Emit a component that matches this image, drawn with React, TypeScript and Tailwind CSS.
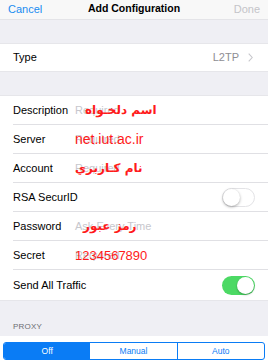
import React from "react";

const FONT = { fontFamily: '"Liberation Sans", Arial, sans-serif' };
const RED_FONT = { fontFamily: '"DejaVu Sans", "Liberation Sans", sans-serif' };

function Toggle({ on }: { on: boolean }) {
  return on ? (
    <div className="w-[33px] h-[19px] rounded-full bg-[#4cd964] relative">
      <div className="absolute right-[1px] top-[1px] w-[17px] h-[17px] rounded-full bg-white shadow-[0_1px_2px_rgba(0,0,0,0.3)]" />
    </div>
  ) : (
    <div className="w-[33px] h-[19px] rounded-full bg-white border border-[#e3e3e6] relative">
      <div className="absolute left-0 top-0 w-[17px] h-[17px] rounded-full bg-white shadow-[0_1px_3px_rgba(0,0,0,0.35)]" />
    </div>
  );
}

function Row({
  label,
  children,
  last,
}: {
  label: string;
  children?: React.ReactNode;
  last?: boolean;
}) {
  return (
    <div className="pl-[13px] bg-white">
      <div
        className={`h-[29px] flex items-center pr-[13px] ${last ? "" : "border-b border-[#e0e0e4]"}`}
      >
        <span className="w-[62px] shrink-0 text-[11px] text-black whitespace-nowrap">{label}</span>
        <div className="flex-1 flex items-center">{children}</div>
      </div>
    </div>
  );
}

function Field({
  placeholder,
  value,
  offset = "left-0",
  size = "text-[13px]",
  rtl,
}: {
  placeholder: string;
  value: string;
  offset?: string;
  size?: string;
  rtl?: boolean;
}) {
  return (
    <div className="relative h-[20px] flex items-center">
      <span className="text-[11px] text-[#c7c7cd] whitespace-nowrap">{placeholder}</span>
      <span
        dir={rtl ? "rtl" : undefined}
        className={`absolute ${offset} top-1/2 -translate-y-1/2 ${size} ${rtl ? "font-bold" : ""} text-[#ff1a1a] whitespace-nowrap leading-none`}
        style={rtl ? RED_FONT : FONT}
      >
        {value}
      </span>
    </div>
  );
}

export default function App() {
  return (
    <div className="w-[268px] h-[364px] bg-[#efeff4] overflow-hidden" style={FONT}>
      {/* nav bar */}
      <div className="h-[20px] bg-[#f8f8f8] border-b border-[#e4e4e8] flex items-start justify-between px-[8px] pt-[1px] relative">
        <span className="text-[11px] text-[#1a8cf0]">Cancel</span>
        <span className="absolute left-0 right-0 top-[1px] text-center text-[10.5px] font-bold text-black">
          Add Configuration
        </span>
        <span className="text-[11px] text-[#c4c4c8]">Done</span>
      </div>

      <div className="h-[23px]" />

      <div className="border-y border-[#e6e6ea] bg-white">
        <div className="h-[27px] flex items-center justify-between pl-[13px] pr-[15px]">
          <span className="text-[11px] text-black">Type</span>
          <span className="flex items-center gap-[9px] text-[11px] text-[#8e8e93]">
            L2TP
            <svg width="5" height="9" viewBox="0 0 5 9" fill="none">
              <path d="M0.7 0.7 L4.2 4.5 L0.7 8.3" stroke="#c7c7cc" strokeWidth="1.1" />
            </svg>
          </span>
        </div>
      </div>

      <div className="h-[23px]" />

      <div className="border-t border-[#e6e6ea]">
        <Row label="Description">
          <Field placeholder="Required" value="اسم دلخـواه" offset="left-[10px]" size="text-[12px]" rtl />
        </Row>
        <Row label="Server">
          <Field placeholder="Required" value="net.iut.ac.ir" size="text-[14px]" />
        </Row>
        <Row label="Account">
          <Field placeholder="Required" value="نام کـاربري" size="text-[12px]" rtl />
        </Row>
        <Row label="RSA SecurID">
          <div className="flex-1" />
          <Toggle on={false} />
        </Row>
        <Row label="Password">
          <Field placeholder="Ask Every Time" value="رمز عبور" offset="left-[8px]" size="text-[12px]" rtl />
        </Row>
        <Row label="Secret">
          <Field placeholder="Required" value="1234567890" />
        </Row>
        <div className="pl-[13px] bg-white border-b border-[#e6e6ea]">
          <div className="h-[30px] flex items-center pr-[13px]">
            <span className="text-[11px] text-black">Send All Traffic</span>
            <div className="flex-1" />
            <Toggle on />
          </div>
        </div>
      </div>

      <div className="h-[35px] flex items-end pl-[13px] pb-[3px]">
        <span className="text-[8px] text-[#6d6d72] tracking-[0.2px]">PROXY</span>
      </div>

      <div className="bg-white h-[40px] pt-[6px] px-[3px]">
        <div className="flex h-[18px] border border-[#0a7cf5] rounded-[3px] overflow-hidden text-[8.5px]">
          <div className="flex-1 bg-[#0a7cf5] text-white flex items-center justify-center">Off</div>
          <div className="flex-1 border-r border-[#0a7cf5] text-[#0a7cf5] flex items-center justify-center">
            Manual
          </div>
          <div className="flex-1 text-[#0a7cf5] flex items-center justify-center">Auto</div>
        </div>
      </div>
    </div>
  );
}
